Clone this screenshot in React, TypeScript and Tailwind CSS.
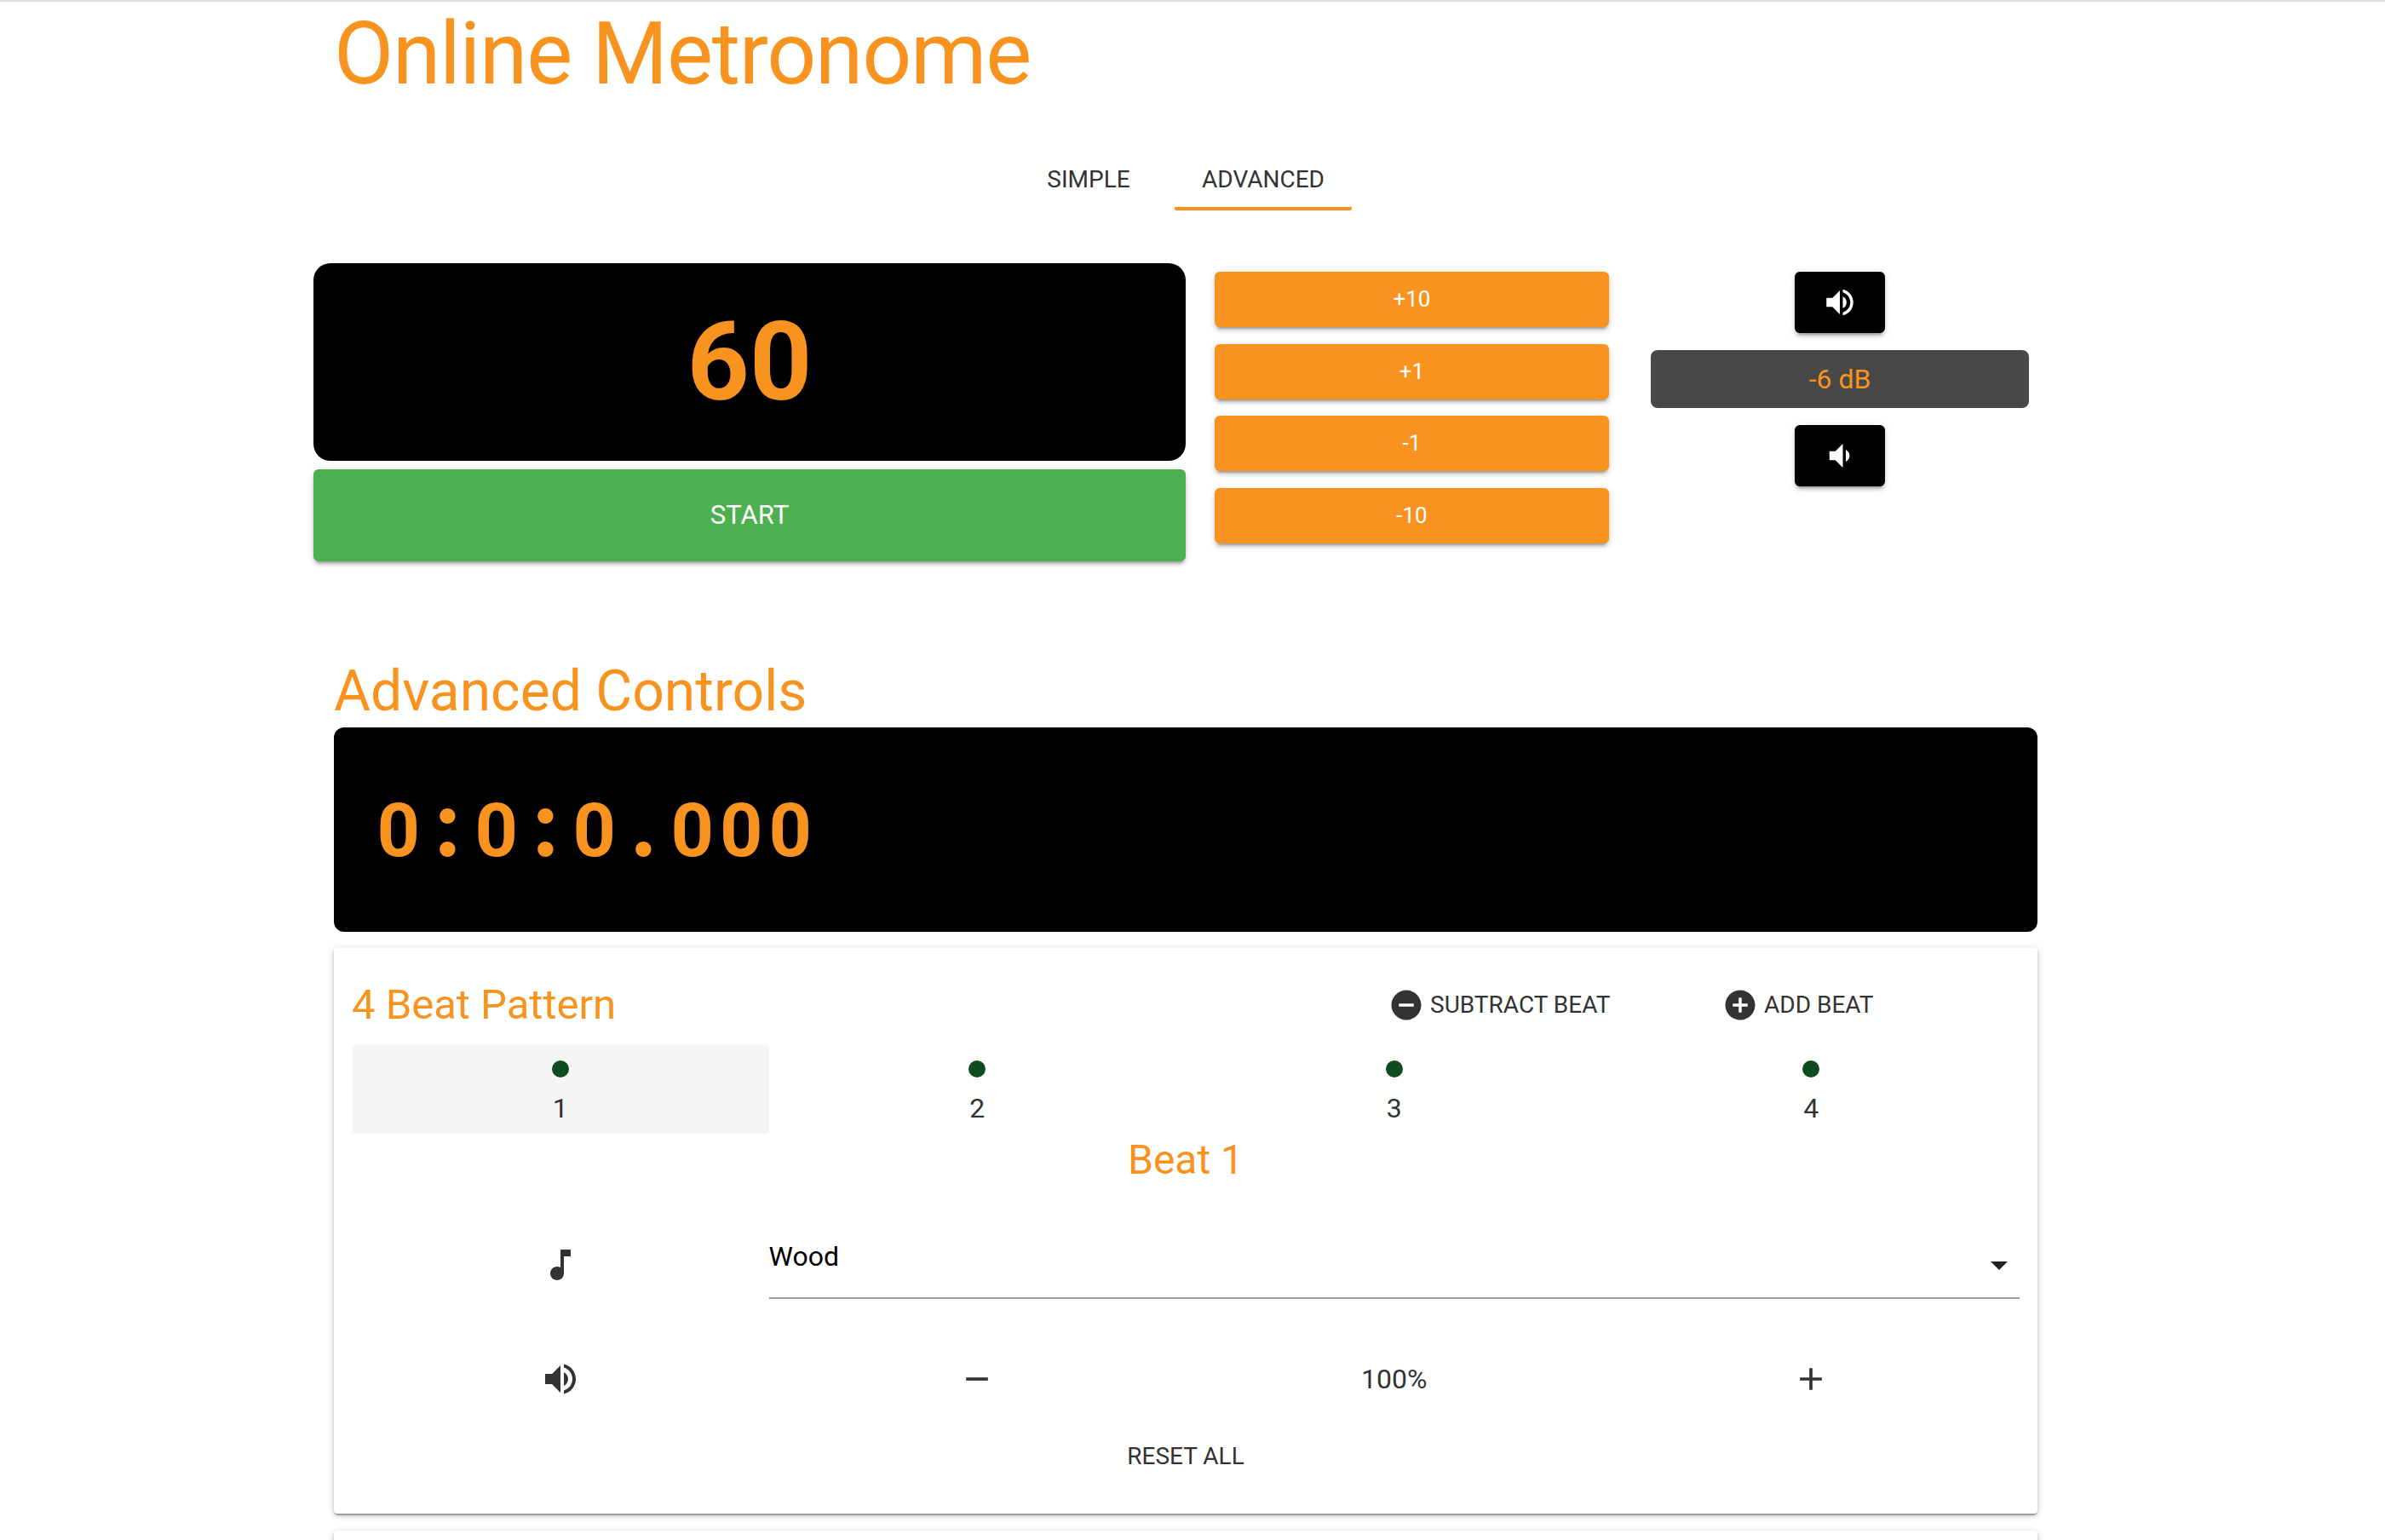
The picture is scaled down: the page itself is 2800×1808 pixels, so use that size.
import React from 'react';

const VOLUME_UP =
  'M3 9v6h4l5 5V4L7 9H3zm13.5 3c0-1.77-1.02-3.29-2.5-4.03v8.05c1.48-.73 2.5-2.25 2.5-4.02zM14 3.23v2.06c2.89.86 5 3.54 5 6.71s-2.11 5.85-5 6.71v2.06c4.01-.91 7-4.49 7-8.77s-2.99-7.86-7-8.77z';
const VOLUME_DOWN = 'M18.5 12c0-1.77-1.02-3.29-2.5-4.03v8.05c1.48-.73 2.5-2.25 2.5-4.02zM5 9v6h4l5 5V4L9 9H5z';
const MUSIC_NOTE = 'M12 3v10.55c-.59-.34-1.27-.55-2-.55-2.21 0-4 1.79-4 4s1.79 4 4 4 4-1.79 4-4V7h4V3h-6z';
const ADD_CIRCLE = 'M12 2C6.48 2 2 6.48 2 12s4.48 10 10 10 10-4.48 10-10S17.52 2 12 2zm5 11h-4v4h-2v-4H7v-2h4V7h2v4h4v2z';
const REMOVE_CIRCLE = 'M12 2C6.48 2 2 6.48 2 12s4.48 10 10 10 10-4.48 10-10S17.52 2 12 2zm5 11H7v-2h10v2z';
const ADD = 'M19 13h-6v6h-2v-6H5v-2h6V5h2v6h6v2z';
const REMOVE = 'M19 13H5v-2h14v2z';
const ARROW_DROP_DOWN = 'M7 10l5 5 5-5z';

const Icon: React.FC<{ d: string; size: number; className?: string }> = ({ d, size, className }) => (
  <svg width={size} height={size} viewBox="0 0 24 24" fill="currentColor" className={className}>
    <path d={d} />
  </svg>
);

const buttonShadow =
  'shadow-[0_6px_2px_-4px_rgba(0,0,0,0.2),0_4px_4px_0_rgba(0,0,0,0.14),0_2px_10px_0_rgba(0,0,0,0.12)]';
const cardShadow =
  'shadow-[0_2px_8px_0_rgba(0,0,0,0.22),0_2px_2px_0_rgba(0,0,0,0.2),0_4px_2px_-2px_rgba(0,0,0,0.16)]';

const StepButton: React.FC<{ label: string }> = ({ label }) => (
  <button className={`h-[65px] w-full rounded-[6px] bg-[#f7931e] text-[26px] text-white ${buttonShadow}`}>{label}</button>
);

const VolumeButton: React.FC<{ d: string }> = ({ d }) => (
  <button className={`flex h-[72px] w-[106px] items-center justify-center rounded-[6px] bg-black text-white ${buttonShadow}`}>
    <Icon d={d} size={42} />
  </button>
);

const App: React.FC = () => {
  return (
    <div className="h-[1808px] overflow-hidden border-t-2 border-[#dedede] bg-white font-['Roboto',sans-serif] text-[#333333]">
      <h1 className="ml-[392px] h-[122px] text-[102px] leading-[122px] tracking-[-1.25px] text-[#f7931e]">Online Metronome</h1>

      <div className="mt-[46px] ml-[1171px] flex h-[77px] w-[416px] text-[28px]">
        <div className="flex h-full w-[208px] items-center justify-center pt-[5px] pl-[6px]">SIMPLE</div>
        <div className="flex h-full w-[208px] items-center justify-center rounded-b-[2px] border-b-4 border-[#f7931e] pt-[9px]">ADVANCED</div>
      </div>

      <div className="mt-[62px] ml-[368px] flex">
        <div className="w-[1024px]">
          <div className="flex h-[232px] items-center justify-center rounded-[20px] bg-black text-[128px] font-bold text-[#f7931e]">60</div>
          <button className={`mt-[10px] h-[108px] w-full rounded-[6px] bg-[#4caf50] text-[31px] text-white ${buttonShadow}`}>START</button>
        </div>

        <div className="ml-[34px] flex w-[463px] flex-col gap-[19.67px] pt-[10px]">
          {['+10', '+1', '-1', '-10'].map(label => (
            <StepButton key={label} label={label} />
          ))}
        </div>

        <div className="ml-[49px] flex w-[444px] flex-col items-center pt-[10px]">
          <VolumeButton d={VOLUME_UP} />
          <div className="mt-[20px] flex h-[68px] w-full items-center justify-center rounded-[8px] bg-[#484848] text-[32px] text-[#f7931e]">-6 dB</div>
          <div className="mt-[20px]">
            <VolumeButton d={VOLUME_DOWN} />
          </div>
        </div>
      </div>

      <div className="ml-[392px] w-[2000px]">
        <h2 className="mt-[113px] h-[80px] text-[66px] leading-[80px] text-[#f7931e]">Advanced Controls</h2>

        <div className="mt-[2px] flex h-[240px] items-center rounded-[12px] bg-black pb-[24px] pl-[47px] text-[#f7931e]">
          <div className="flex items-baseline text-[88px] leading-none font-bold">
            {'0:0:0.000'.split('').map((ch, i) =>
              ch === ':' || ch === '.' ? (
                <span key={i} className="w-[57.5px] text-center font-['Lato',sans-serif] text-[112px] font-black">{ch}</span>
              ) : (
                <span key={i} className="w-[57.5px] text-center">{ch}</span>
              ),
            )}
          </div>
        </div>

        <div className={`mt-[19px] h-[664px] rounded-[4px] bg-white px-[21px] pt-[20px] ${cardShadow}`}>
          <div className="flex h-[94px] items-center text-[28px]">
            <h3 className="w-[1221px] text-[49px] text-[#f7931e]">4 Beat Pattern</h3>
            <div className="flex w-[392px] items-center gap-[7px]">
              <Icon d={REMOVE_CIRCLE} size={42} className="-ml-[4px]" />
              SUBTRACT BEAT
            </div>
            <div className="flex items-center gap-[7px]">
              <Icon d={ADD_CIRCLE} size={42} className="-ml-[4px]" />
              ADD BEAT
            </div>
          </div>

          <div className="grid h-[104px] grid-cols-4">
            {[1, 2, 3, 4].map(n => (
              <div key={n} className={`flex flex-col items-center rounded-[4px] pt-[18px] ${n === 1 ? 'bg-[#f5f5f5]' : ''}`}>
                <div className="h-[20px] w-[20px] rounded-full bg-[#0f4d21]"></div>
                <div className="mt-[12px] text-[32px] leading-[48px]">{n}</div>
              </div>
            ))}
          </div>

          <h3 className="flex h-[59px] items-center justify-center pt-[3px] text-[48px] text-[#f7931e]">Beat 1</h3>

          <div className="grid h-[135px] grid-cols-4">
            <div className="flex items-center justify-center pt-[54px]">
              <Icon d={MUSIC_NOTE} size={48} />
            </div>
            <div className="col-span-3 flex justify-between border-b-2 border-[#9e9e9e] pt-[66px] text-[32px] leading-[38px] text-black">
              <span>Wood</span>
              <Icon d={ARROW_DROP_DOWN} size={48} className="mt-[5px] text-[#222222]" />
            </div>
          </div>

          <div className="mt-[24px] grid h-[140px] grid-cols-4 items-center justify-items-center text-[32px]">
            <Icon d={VOLUME_UP} size={48} />
            <Icon d={REMOVE} size={44} />
            <span>100%</span>
            <Icon d={ADD} size={44} />
          </div>

          <div className="flex h-[41px] items-center justify-center text-[28px]">RESET ALL</div>
        </div>

        <div className={`mt-[20px] h-[200px] rounded-[4px] bg-white ${cardShadow}`}></div>
      </div>
    </div>
  );
};

export default App;
